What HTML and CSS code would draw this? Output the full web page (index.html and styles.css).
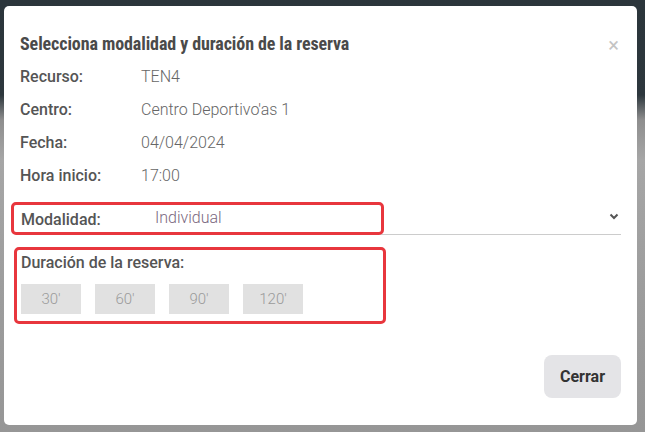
FILE: index.html
```html
<!DOCTYPE html>
<html lang="es">
<head>
  <meta charset="UTF-8" />
  <title>Reserva</title>
  <link rel="stylesheet" href="styles.css">
</head>
<body>
  <div class="modal">
    <div class="modal-header">
      <h2>Selecciona modalidad y duración de la reserva</h2>
      <span class="close">&times;</span>
    </div>
    <div class="info">
      <div class="row"><span class="label">Recurso:</span><span class="value">TEN4</span></div>
      <div class="row"><span class="label">Centro:</span><span class="value">Centro Deportivo'as 1</span></div>
      <div class="row"><span class="label">Fecha:</span><span class="value">04/04/2024</span></div>
      <div class="row"><span class="label">Hora inicio:</span><span class="value">17:00</span></div>
    </div>
    <div class="select-line">
      <div class="mark mark-modal">
        <span class="label">Modalidad:</span>
        <span class="option">Individual</span>
      </div>
      <svg class="chevron" width="10" height="7" viewBox="0 0 10 7"><path d="M1.5 1.5 L5 5 L8.5 1.5" fill="none" stroke="#555" stroke-width="2"/></svg>
    </div>
    <div class="mark mark-dur">
      <div class="dur-title">Duración de la reserva:</div>
      <div class="dur-buttons">
        <button>30'</button>
        <button>60'</button>
        <button>90'</button>
        <button>120'</button>
      </div>
    </div>
    <div class="footer">
      <button class="close-btn">Cerrar</button>
    </div>
  </div>
</body>
</html>
```

FILE: styles.css
```css
body {
  margin: 0;
  height: 432px;
  font-family: Roboto, "Liberation Sans", sans-serif;
  background: linear-gradient(to bottom, #2b353b 0, #2d373d 95px, #8e8e8e 120px, #a6a6a6 160px, #9c9c9c 300px, #969696 432px);
  padding: 6px 8px 0 4px;
  box-sizing: border-box;
}
.modal {
  background: #fff;
  border-radius: 5px;
  height: 419px;
  padding: 0 16px 0 7px;
  box-sizing: border-box;
  position: relative;
}
.modal-header {
  display: flex;
  justify-content: space-between;
  align-items: center;
  padding: 27px 0 0 9px;
  height: 21px;
}
.modal-header h2 {
  margin: 0;
  font-family: "Liberation Sans Narrow", "Roboto Condensed", Roboto, sans-serif;
  font-weight: bold;
  font-size: 18px;
  color: #4a4a4a;
  letter-spacing: -0.1px;
}
.close {
  color: #c4c4c4;
  font-size: 20px;
  margin-top: 2px;
  margin-right: 2px;
}
.info {
  padding: 6px 0 0 9px;
}
.row {
  display: flex;
  height: 33px;
  align-items: center;
  font-size: 16px;
}
.label {
  width: 121px;
  color: #555;
  font-weight: 500;
}
.value {
  color: #666;
  font-weight: 300;
}
.select-line {
  margin-top: 10px;
  height: 32px;
  border-bottom: 1px solid #ccc;
  display: flex;
  justify-content: space-between;
  align-items: center;
  margin-left: 9px;
}
.mark {
  border: 3px solid #e8363d;
  border-radius: 5px;
  box-sizing: border-box;
}
.mark-modal {
  margin-left: -9px;
  width: 373px;
  height: 33px;
  margin-top: 1px;
  display: flex;
  align-items: center;
  padding-left: 7px;
  font-size: 16px;
}
.mark-modal .label {
  width: 134px;
  padding-top: 2px;
}
.option {
  color: #7a6880;
  font-weight: 300;
  padding-bottom: 2px;
}
.chevron {
  margin-right: 2px;
  margin-top: -4px;
}
.mark-dur {
  margin-top: 12px;
  margin-left: 3px;
  width: 372px;
  height: 77px;
  padding: 3px 0 0 4px;
}
.dur-title {
  font-size: 16px;
  font-weight: 500;
  color: #555;
}
.dur-buttons {
  display: flex;
  gap: 14px;
  margin-top: 12px;
}
.dur-buttons button {
  width: 60px;
  height: 30px;
  border: none;
  background: #e1e1e1;
  color: #9a9a9a;
  font-family: Roboto, sans-serif;
  font-weight: 300;
  font-size: 15px;
  padding: 0;
}
.footer {
  display: flex;
  justify-content: flex-end;
  margin-top: 31px;
}
.close-btn {
  width: 77px;
  height: 43px;
  border: none;
  border-radius: 8px;
  background: #e4e4e7;
  color: #333;
  font-family: Roboto, sans-serif;
  font-weight: bold;
  font-size: 16px;
}
```
